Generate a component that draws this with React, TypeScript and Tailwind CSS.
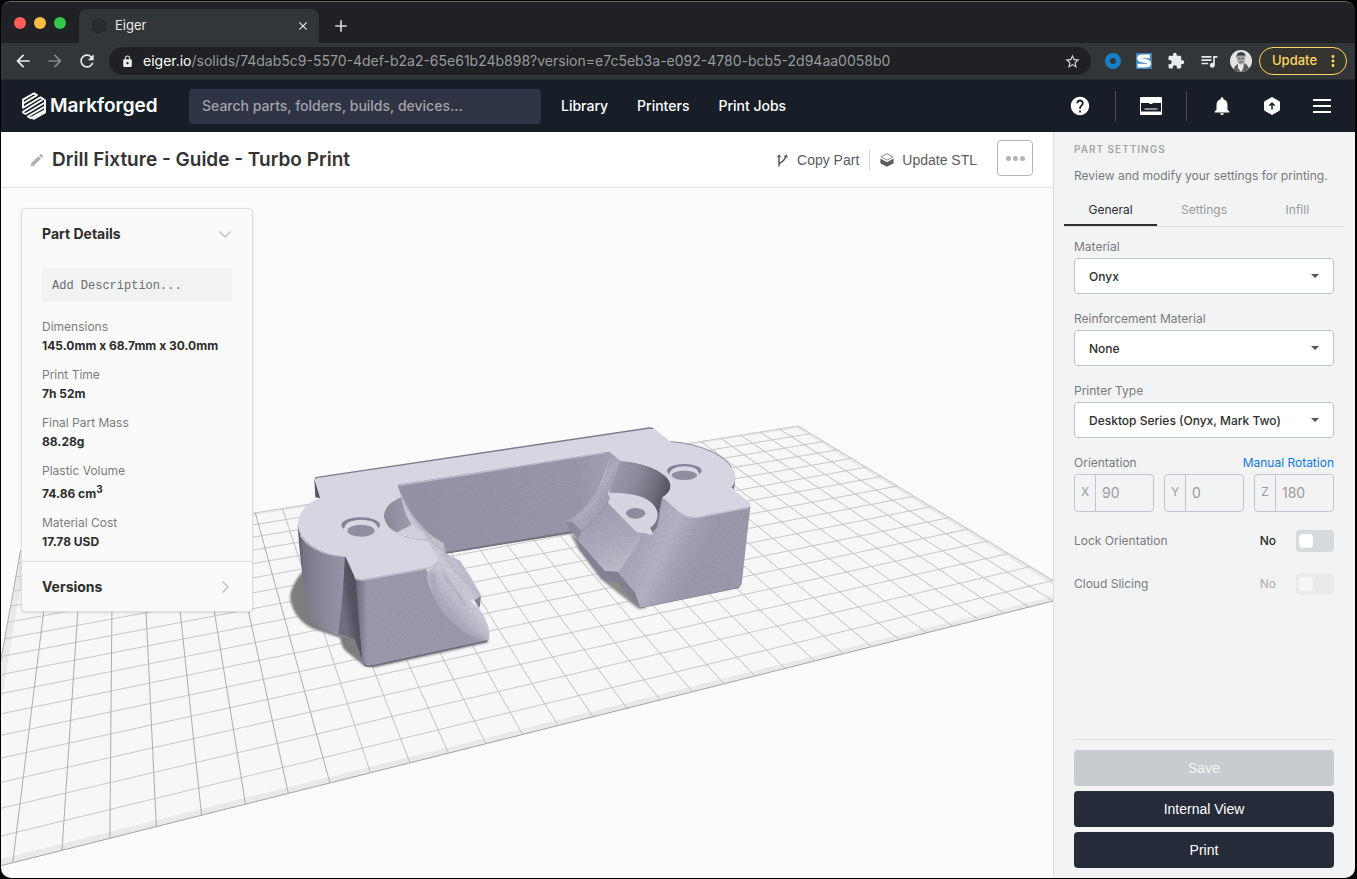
import React from 'react';
import clsx from 'clsx';
import {
  MdAdd, MdArrowBack, MdArrowForward, MdClose, MdEdit, MdExtension, MdHelp,
  MdLock, MdMoreVert, MdNotifications, MdQueueMusic, MdRefresh, MdStarBorder,
} from 'react-icons/md';

/* ---------- Build plate ---------- */

type Point = [number, number];

const COLS = 32;
const ROWS = 16;

// Projected plate corners: back left, back right, front right, front left
const CORNERS: Point[] = [[20.6, 550.4], [798, 426], [1077, 595], [-38, 875.5]];

const project = (col: number, row: number): Point => {
  const [[x0, y0], [x1, y1], [x2, y2], [x3, y3]] = CORNERS;
  const dx1 = x1 - x2, dx2 = x3 - x2, sx = x0 - x1 + x2 - x3;
  const dy1 = y1 - y2, dy2 = y3 - y2, sy = y0 - y1 + y2 - y3;
  const det = dx1 * dy2 - dx2 * dy1;
  const g = (sx * dy2 - dx2 * sy) / det;
  const h = (dx1 * sy - sx * dy1) / det;
  const u = col / COLS;
  const v = row / ROWS;
  const w = g * u + h * v + 1;
  return [
    ((x1 - x0 + g * x1) * u + (x3 - x0 + h * x3) * v + x0) / w,
    ((y1 - y0 + g * y1) * u + (y3 - y0 + h * y3) * v + y0) / w,
  ];
};

const range = (n: number) => Array.from({ length: n + 1 }, (_, i) => i);
const points = (list: Point[]) => list.map(([c, r]) => project(c, r).map((n) => n.toFixed(2)).join(',')).join(' ');

const GridLine = ({ from, to, color }: { from: Point; to: Point; color: string }) => {
  const [x1, y1] = project(...from);
  const [x2, y2] = project(...to);
  return <line x1={x1} y1={y1} x2={x2} y2={y2} stroke={color} />;
};

const BuildPlate = () => (
  <g>
    <polygon points={points([[0, 0], [COLS, 0], [COLS, ROWS], [0, ROWS]])} fill="#e9e9ec" />
    <polygon points={points([[0.2, 0.2], [31.8, 0.2], [31.8, 15.78], [0.2, 15.78]])} fill="#f7f7f7" />
    {range(ROWS).map((r) => (
      <GridLine key={r} from={[0, r]} to={[COLS, r]} color={r === ROWS ? '#a3a3a3' : '#c8c8c8'} />
    ))}
    {range(COLS).map((c) => (
      <GridLine key={c} from={[c, 0]} to={[c, ROWS]} color={c < 9 ? '#adadad' : '#c0c0c0'} />
    ))}
  </g>
);

/* ---------- Part model ---------- */

const TOP_FACE =
  'M103 192 Q104 188 112 188 L1108 39 Q1118 37 1124 42 L1172 80 Q1240 84 1300 112 Q1366 146 1366 190 Q1364 208 1352 220 L1410 263 Q1416 271 1405 277 L1256 306 Q1222 310 1200 292 L1148 247 Q1172 232 1172 211 Q1168 180 1110 156 Q1070 141 1022 138 L990 111 Q985 108 970 112 L360 208 Q350 210 352 216 L365 245 Q312 266 311 305 Q322 366 440 377 L449 384 L474 434 Q471 455 440 460 L255 494 Q232 498 224 486 L197 425 Q140 422 95 393 Q56 366 53 330 Q56 275 120 248 Z';

const SILHOUETTE =
  'M103 192 L1118 38 L1172 80 Q1366 100 1366 190 L1360 220 L1413 270 L1382 514 L1078 578 L1010 500 L965 490 L895 395 L875 350 L498 415 L540 437 L603 545 L600 578 L628 640 L626 678 L265 755 L245 735 L225 672 Q120 660 95 610 Q70 520 53 335 Q56 275 108 250 Z';

const PartModel = () => (
  <g transform="translate(280 415) scale(.33333)">
    <defs>
      <linearGradient id="cylinder" x1="53" x2="235" y1="0" y2="0" gradientUnits="userSpaceOnUse">
        <stop offset="0" stopColor="#4e4d58" />
        <stop offset=".1" stopColor="#777687" />
        <stop offset=".3" stopColor="#858494" />
        <stop offset=".75" stopColor="#9796a7" />
        <stop offset="1" stopColor="#7c7b8b" />
      </linearGradient>
      <linearGradient id="recess" x1="185" x2="245" y1="560" y2="550" gradientUnits="userSpaceOnUse">
        <stop offset="0" stopColor="#706f80" />
        <stop offset=".45" stopColor="#535260" />
        <stop offset="1" stopColor="#4a4955" />
      </linearGradient>
      <linearGradient id="blockLeft" x1="228" x2="262" y1="0" y2="0" gradientUnits="userSpaceOnUse">
        <stop offset="0" stopColor="#6a697a" />
        <stop offset="1" stopColor="#9b9aac" />
      </linearGradient>
      <linearGradient id="scoop" x1="470" x2="560" y1="620" y2="545" gradientUnits="userSpaceOnUse">
        <stop offset="0" stopColor="#9b9aac" />
        <stop offset=".55" stopColor="#b6b5c5" />
        <stop offset="1" stopColor="#cfcedb" />
      </linearGradient>
      <linearGradient id="fin" x1="470" x2="560" y1="510" y2="440" gradientUnits="userSpaceOnUse">
        <stop offset="0" stopColor="#b3b2c2" />
        <stop offset=".5" stopColor="#cecdd9" />
        <stop offset="1" stopColor="#b9b8c8" />
      </linearGradient>
      <linearGradient id="wall" x1="380" x2="990" y1="0" y2="0" gradientUnits="userSpaceOnUse">
        <stop offset="0" stopColor="#9594a6" />
        <stop offset=".85" stopColor="#9998aa" />
        <stop offset="1" stopColor="#a5a4b5" />
      </linearGradient>
      <linearGradient id="boreLeft" x1="311" x2="400" y1="0" y2="0" gradientUnits="userSpaceOnUse">
        <stop offset="0" stopColor="#8a899a" />
        <stop offset="1" stopColor="#a3a2b3" />
      </linearGradient>
      <linearGradient id="boreRight" x1="990" x2="1172" y1="170" y2="225" gradientUnits="userSpaceOnUse">
        <stop offset="0" stopColor="#9f9eb0" />
        <stop offset=".45" stopColor="#8b8a9b" />
        <stop offset=".75" stopColor="#6f6e7c" />
        <stop offset="1" stopColor="#4d4c58" />
      </linearGradient>
      <linearGradient id="saddle" x1="900" x2="985" y1="230" y2="285" gradientUnits="userSpaceOnUse">
        <stop offset="0" stopColor="#9998aa" />
        <stop offset=".4" stopColor="#aeadbd" />
        <stop offset="1" stopColor="#9f9eb0" />
      </linearGradient>
      <linearGradient id="ramp" x1="950" x2="1010" y1="300" y2="470" gradientUnits="userSpaceOnUse">
        <stop offset="0" stopColor="#a3a2b4" />
        <stop offset=".6" stopColor="#b0afbf" />
        <stop offset="1" stopColor="#c0bfcd" />
      </linearGradient>
      <linearGradient id="blockRight" x1="1060" x2="1230" y1="420" y2="500" gradientUnits="userSpaceOnUse">
        <stop offset="0" stopColor="#a9a8b9" />
        <stop offset=".4" stopColor="#b5b4c4" />
        <stop offset=".75" stopColor="#a2a1b3" />
        <stop offset="1" stopColor="#9b9aac" />
      </linearGradient>
      <filter id="soft" x="-10%" y="-10%" width="120%" height="120%">
        <feGaussianBlur stdDeviation="3" />
      </filter>
      <filter id="grain" x="0" y="0" width="100%" height="100%">
        <feTurbulence type="fractalNoise" baseFrequency=".3" numOctaves="3" />
        <feColorMatrix values="0 0 0 0 .2  0 0 0 0 .2  0 0 0 0 .27  3 0 0 0 -1.2" />
      </filter>
      <clipPath id="body">
        <path d={SILHOUETTE} />
      </clipPath>
    </defs>

    {/* cast shadow */}
    <path d="M75 460 Q25 520 31 555 Q42 610 95 640 L180 668 Q186 700 200 710 L252 752 L285 757 L630 681 L300 600 Z" fill="#7d7d7d" filter="url(#soft)" />
    <path d="M868 352 L895 402 L962 492 L1076 582 L1100 578 L1000 440 Z" fill="#8b8b8b" filter="url(#soft)" />
    <path d="M495 417 L880 354 L880 346 L495 405 Z" fill="#6f6e7c" />
    <path d="M1080 580 L1378 519 L1378 508 L1080 568 Z" fill="#6f6e7c" />

    {/* side walls */}
    <path d="M103 192 L106 247 L122 250 L130 240 Z" fill="#565561" />
    <path d="M53 330 Q60 440 75 530 Q82 590 98 615 Q125 655 225 672 L235 480 L197 420 L120 360 Z" fill="url(#cylinder)" />
    <path d="M195 423 L230 490 L247 735 L224 672 L175 658 Q190 540 195 423 Z" fill="url(#recess)" />
    <path d="M352 208 L365 260 L400 335 L450 385 L500 414 L520 380 Z" fill="#b7b6c6" />
    <path d="M352 208 L990 109 Q992 150 940 250 Q905 300 858 320 L880 350 L690 380 L498 414 L492 386 Q395 330 352 208 Z" fill="url(#wall)" />
    <path d="M500 413 L875 350" stroke="#757484" strokeWidth="4" />

    {/* left bore */}
    <path d="M365 245 Q312 266 311 305 Q318 340 352 354 L395 330 Q380 290 365 245 Z" fill="url(#boreLeft)" />

    {/* left saddle and fin */}
    <path d="M362 240 Q392 315 440 356 L492 384 Q484 398 490 412 L540 437 L575 490 L602 540 Q604 550 597 578 L584 558 Q520 540 485 470 L470 425 L440 376 L388 318 Q370 285 362 240 Z" fill="url(#fin)" />
    <path d="M410 340 Q450 372 486 404 Q500 440 560 500 Q590 528 600 543" fill="none" stroke="#b3b2c2" strokeWidth="4" filter="url(#soft)" />
    <path d="M584 556 L602 542 L600 572 L596 579 Z" fill="#858495" />
    <path d="M474 432 L488 478 L560 545 L600 585 Q622 615 628 650 L628 674 Q570 700 480 620 L438 470 Q470 455 474 432 Z" fill="url(#scoop)" />
    <path d="M488 474 Q520 520 556 568" fill="none" stroke="#a9a8b9" strokeWidth="5" filter="url(#soft)" />
    <path d="M226 488 L255 494 L440 460 Q440 520 488 590 Q540 660 626 677 L274 754 Q252 758 247 738 Z" fill="url(#blockLeft)" />
    <path d="M460 475 Q458 540 505 592 Q560 655 612 672" fill="none" stroke="#adacbd" strokeWidth="12" filter="url(#soft)" />
    <path d="M250 744 Q256 758 276 753 L622 678" fill="none" stroke="#6d6c7b" strokeWidth="4" />

    {/* right bore, saddle and ramp */}
    <path d="M1015 135 Q1070 141 1110 156 Q1168 180 1172 211 Q1172 232 1148 247 L1133 305 L985 240 Z" fill="url(#boreRight)" />
    <path d="M990 110 L1022 138 Q1012 155 1008 180 L984 235 L1010 280 L940 400 L900 385 L880 345 L870 322 L852 321 Q910 295 945 235 Q985 175 990 110 Z" fill="url(#saddle)" />
    <path d="M882 316 Q950 275 996 160" fill="none" stroke="#b7b6c6" strokeWidth="4" filter="url(#soft)" />
    <path d="M855 321 L878 321 L906 350 L894 372 L872 348 Z" fill="#8d8c9e" />
    <path d="M986 258 L1072 350 L1112 356 L1050 450 L1015 476 L975 470 L892 376 L906 352 Q950 315 986 258 Z" fill="url(#ramp)" />
    <path d="M906 350 Q950 313 985 262" fill="none" stroke="#9392a4" strokeWidth="3" />
    <path d="M1065 350 L1118 358 L1148 247 L1200 292 Q1222 310 1256 306 L1411 274 L1385 508 Q1382 516 1370 519 L1080 578 L1066 540 L1012 472 Q1055 430 1065 350 Z" fill="url(#blockRight)" />
    <path d="M1006 468 Q1050 425 1078 358" fill="none" stroke="#bfbecc" strokeWidth="7" filter="url(#soft)" />
    <path d="M892 374 L975 468 L1012 470 L1066 534 L1080 578 L1008 498 Q985 502 965 490 L895 398 Z" fill="#838294" />

    <g clipPath="url(#body)">
      <rect width="1420" height="760" filter="url(#grain)" opacity=".2" />
    </g>

    {/* counterbore floors */}
    <path d="M350 352 L396 330 L430 352 L440 375 Q390 372 350 352 Z" fill="#cfceda" />
    <path d="M352 356 Q390 375 440 376" fill="none" stroke="#8f8e9f" strokeWidth="3" />
    <path d="M1133 300 L1146 256 L1132 335 L1118 354 L1110 338 Q1130 325 1133 300 Z" fill="#7b7a8a" />
    <path d="M983 233 Q1050 232 1092 248 Q1133 270 1133 300 Q1130 325 1108 338 L1116 358 Q1108 362 1098 355 L1070 352 L984 264 L990 250 Z" fill="#d5d5e1" />
    <ellipse cx="1067" cy="295" rx="29" ry="16" fill="#8d8c9d" />

    {/* top face */}
    <path d="M1352 216 L1366 190 L1362 224 Z" fill="#7b7a8b" />
    <path d={TOP_FACE} fill="#d6d6e2" />
    <path d="M105 190 L112 187 L1108 39 L1120 40" fill="none" stroke="#7d7c90" strokeWidth="4" />
    <path d="M1172 80 Q1240 84 1300 112 Q1340 134 1354 156" fill="none" stroke="#8d8c9e" strokeWidth="3" />
    <path d="M224 487 Q232 498 255 494 L440 460 Q464 456 472 442" fill="none" stroke="#bcbbca" strokeWidth="5" />
    <path d="M1200 292 Q1222 310 1256 306 L1405 277" fill="none" stroke="#c3c2cf" strokeWidth="5" />
    <path d="M60 360 Q75 385 105 402 Q145 422 195 425" fill="none" stroke="#c0bfcd" strokeWidth="4" />
    <path d="M358 211 L975 113" fill="none" stroke="#bdbccb" strokeWidth="4" />

    {/* screw holes */}
    <ellipse cx="242" cy="330" rx="58" ry="23" fill="#83829a" />
    <path d="M192 342 Q196 315 243 314 Q290 315 294 340 Q290 352 243 356 Q196 354 192 342 Z" fill="#d8d8e3" />
    <ellipse cx="243" cy="347" rx="41" ry="18" fill="#8f8e9f" />
    <ellipse cx="1213" cy="167" rx="52" ry="20" fill="#83829a" />
    <path d="M1168 178 Q1172 155 1213 154 Q1254 155 1258 176 Q1254 188 1213 190 Q1172 188 1168 178 Z" fill="#d8d8e3" />
    <ellipse cx="1213" cy="181" rx="38" ry="14" fill="#8f8e9f" />
  </g>
);

/* ---------- Logos ---------- */

const HexLogo = ({ className }: { className?: string }) => (
  <svg viewBox="0 0 24 28" className={className} fill="none" stroke="currentColor" strokeWidth="1.9" strokeLinejoin="round" aria-hidden="true">
    <path d="M1 11.500V7.600L12 1.300l3 1.800L1 11.500v4.200L18.500 5.300l3 1.700L1 19.700v.8l2.500 1.500L23 10.500v-3M23 10.500v4.200L5.800 24.500l3 1.700L23 18.300v-3.600M23 18.300v2.200l-11 6.300-3.200-1.800" />
  </svg>
);

/* ---------- Browser chrome ---------- */

const TabStrip = () => (
  <div className="flex h-[41px] items-end bg-[#202124] pl-[13px]">
    <div className="flex h-full w-[65px] items-center gap-2">
      <span className="size-3 rounded-full bg-[#ff5f57]" />
      <span className="size-3 rounded-full bg-[#febc40]" />
      <span className="size-3 rounded-full bg-[#34c84a]" />
    </div>
    <div className="flex h-[34px] w-60 items-center rounded-t-lg bg-[#323639] px-3 text-[13px] text-[#e8eaed]">
      <HexLogo className="mr-2 h-4 w-4 text-[#242628]" />
      <span className="flex-1">Eiger</span>
      <button aria-label="Close tab" className="-mr-[3px]"><MdClose size={14} /></button>
    </div>
    <button aria-label="New tab" className="ml-3 flex h-[34px] items-center text-[#d5d7da]"><MdAdd size={20} /></button>
  </div>
);

const AddressBar = () => (
  <div className="flex h-9 items-center bg-[#323639] pl-3 pr-2 text-[#e8eaed]">
    <button aria-label="Back"><MdArrowBack size={20} /></button>
    <button aria-label="Forward" className="ml-3 text-[#85888b]"><MdArrowForward size={20} /></button>
    <button aria-label="Reload" className="ml-3"><MdRefresh size={20} /></button>
    <div className="ml-3 flex h-7 min-w-0 flex-1 items-center rounded-full bg-[#202124] pl-3 pr-[10px] text-sm">
      <MdLock size={13} className="shrink-0" />
      <div className="ml-[9px] flex-1 truncate text-[#989b9f]">
        <span className="text-white">eiger.io</span>/solids/74dab5c9-5570-4def-b2a2-65e61b24b898?version=e7c5eb3a-e092-4780-bcb5-2d94aa0058b0
      </div>
      <button aria-label="Bookmark" className="text-[#d0d2d5]"><MdStarBorder size={17} /></button>
    </div>
    <div className="ml-[14px] flex items-center gap-[15px]">
      <span className="size-4 rounded-full border-[5px] border-[#1481c9]" />
      <svg viewBox="0 0 16 16" className="size-4" aria-hidden="true">
        <rect width="16" height="16" fill="#3f84bd" />
        <path d="M14 3.400H5.500Q3 3.400 3 5.200 3 7 5.500 7.300L10.500 8.200Q13 8.700 13 10.500 13 12.600 10 12.600H1.500" fill="none" stroke="#fff" strokeWidth="3.800" />
      </svg>
      <MdExtension size={18} />
      <MdQueueMusic size={20} className="-mx-px" />
    </div>
    <svg viewBox="0 0 22 22" className="ml-3 size-[22px] rounded-full" role="img" aria-label="Profile">
      <rect width="22" height="22" fill="#e4e4e4" />
      <path d="M3 22Q4 15 8 14l6-1q5 2 6 9z" fill="#5c5c5c" />
      <path d="M8 13h6l-1 6-2 3-3-4z" fill="#e9e9e9" />
      <ellipse cx="11" cy="9" rx="4" ry="5.500" fill="#a3a3a3" />
      <path d="M6.500 8Q6 2 11 2t5 6l-1-2.500H8z" fill="#3d3d3d" />
      <path d="M8.500 8.500h2m1.500 0h2M9.500 12h3" stroke="#5a5a5a" />
    </svg>
    <button className="ml-[7px] flex h-7 w-[88px] items-center justify-between rounded-full border border-[#fdd663] bg-[#35342e] pl-3 pr-1 text-[13px] font-medium text-[#fdd663]">
      Update <MdMoreVert size={18} />
    </button>
  </div>
);

/* ---------- App header ---------- */

const Header = () => (
  <header className="flex h-[53px] items-center border-t border-[#24292f] bg-[#171e28] pl-[21px] pr-6 text-white">
    <a href="#home" className="flex w-[167px] items-center gap-1">
      <HexLogo className="h-7 w-6" />
      <span className="text-[19px] font-semibold">Markforged</span>
    </a>
    <input
      type="search"
      aria-label="Search"
      placeholder="Search parts, folders, builds, devices..."
      className="h-[35px] w-[352px] rounded bg-[#2e3346] px-[13px] pb-[2px] text-sm font-medium outline-none placeholder:text-[#a2a3a8]"
    />
    <nav className="ml-5 flex flex-1 gap-[29px] text-sm font-medium">
      <a href="#library">Library</a>
      <a href="#printers">Printers</a>
      <a href="#jobs">Print Jobs</a>
    </nav>
    <button aria-label="Help"><MdHelp size={22} /></button>
    <span className="mx-6 h-[30px] w-px bg-[#4a4f59]" />
    <button aria-label="Devices">
      <svg viewBox="0 0 22 18" className="h-[18px] w-[22px]">
        <path fillRule="evenodd" fill="#fff" d="M1 0h20a1 1 0 0 1 1 1v16a1 1 0 0 1-1 1H1a1 1 0 0 1-1-1V1a1 1 0 0 1 1-1zM1 6v8.500h20V6h-8l-1 1h-2L9 6z" />
        <path d="M4.500 12h13" stroke="#fff" />
      </svg>
    </button>
    <span className="mx-6 h-[30px] w-px bg-[#4a4f59]" />
    <div className="flex items-center gap-[30px]">
      <button aria-label="Notifications"><MdNotifications size={22} /></button>
      <button aria-label="Updates">
        <svg viewBox="0 0 18 18" className="size-[18px]">
          <path d="M9 .5l7.500 4.300v8.400L9 17.500l-7.500-4.300V4.800z" fill="#fff" stroke="#fff" strokeLinejoin="round" />
          <path d="M9 12.500V6.500M6.300 8.800L9 6l2.700 2.800" fill="none" stroke="#171e28" strokeWidth="1.500" />
        </svg>
      </button>
      <button aria-label="Menu" className="ml-[2px] flex w-[18px] flex-col gap-1">
        <span className="h-[2px] bg-white" />
        <span className="h-[2px] bg-white" />
        <span className="h-[2px] bg-white" />
      </button>
    </div>
  </header>
);

const TitleBar = () => (
  <div className="flex h-14 items-center border-b border-[#e3e3e3] bg-white pl-7 pr-5">
    <button aria-label="Rename part" className="text-[#b0b0b0]"><MdEdit size={16} /></button>
    <h1 className="ml-[7px] flex-1 pt-px text-[19px] font-semibold text-[#333]">Drill Fixture - Guide - Turbo Print</h1>
    <div className="flex items-center font-['Liberation_Sans',sans-serif] text-sm text-[#5b5c60]">
      <button className="flex items-center gap-2">
        <svg viewBox="0 0 14 14" className="size-[14px]" fill="none" stroke="currentColor" strokeWidth="1.500">
          <path d="M4 13.500V3M4 10.500Q9.500 8 10.700 3.500" />
          <path d="M1.800 4.200L4 1.300l2.200 2.900zM8.700 3.200l3.200-1.900.8 3.600z" fill="currentColor" stroke="none" />
        </svg>
        Copy Part
      </button>
      <span className="mx-[10px] h-5 w-px bg-[#dcdcdc]" />
      <button className="flex items-center gap-2">
        <svg viewBox="0 0 14 14" className="size-[14px]">
          <path d="M7 .6L13 3.800 7 7.200 1 3.800z" fill="#fff" stroke="#85868a" />
          <path d="M.4 5.600L7 9.200l6.600-3.600V10.200L7 13.800.4 10.200z" fill="currentColor" />
        </svg>
        Update STL
      </button>
    </div>
    <button aria-label="More actions" className="ml-5 mt-2 flex size-9 items-center justify-center gap-[2px] self-start rounded border border-[#b5b5b5]">
      <span className="size-[5px] rounded-full bg-[#b5b5b5]" />
      <span className="size-[5px] rounded-full bg-[#b5b5b5]" />
      <span className="size-[5px] rounded-full bg-[#b5b5b5]" />
    </button>
  </div>
);

/* ---------- Viewer ---------- */

const DETAILS: { label: string; value: React.ReactNode }[] = [
  { label: 'Dimensions', value: '145.0mm x 68.7mm x 30.0mm' },
  { label: 'Print Time', value: '7h 52m' },
  { label: 'Final Part Mass', value: '88.28g' },
  { label: 'Plastic Volume', value: <span className="flex h-[23px] items-end">74.86 cm<sup className="static self-start text-[10px] leading-[19px]">3</sup></span> },
  { label: 'Material Cost', value: '17.78 USD' },
];

const Chevron = ({ d }: { d: string }) => (
  <svg viewBox="0 0 12 12" className="size-3" fill="none" stroke="#c2c2c2" strokeWidth="1.500" aria-hidden="true">
    <path d={d} />
  </svg>
);

const PartDetails = () => (
  <section className="absolute left-5 top-5 w-58 rounded border border-[#dedede] bg-[#fafafa] text-xs shadow">
    <button className="flex h-[50px] w-full items-center justify-between pl-5 pr-[21px] text-sm font-bold text-[#2d2d2d]">
      Part Details <Chevron d="M.5 3.500L6 9l5.500-5.500" />
    </button>
    <div className="px-5 pb-[10px] pt-[9px]">
      <input
        aria-label="Description"
        placeholder="Add Description..."
        className="h-[34px] w-full bg-[#f1f3f3] px-[10px] pt-[2px] font-['Liberation_Mono',monospace] text-xs outline-none placeholder:text-[#6c6c6c]"
      />
      <dl className="mt-[15px] flex flex-col gap-[10px] leading-[19px]">
        {DETAILS.map((d) => (
          <div key={d.label}>
            <dt className="text-[#7c7c7c]">{d.label}</dt>
            <dd className="font-bold text-[#2d2d2d]">{d.value}</dd>
          </div>
        ))}
      </dl>
    </div>
    <button className="flex h-[50px] w-full items-center justify-between border-t border-[#dedede] pl-5 pr-[21px] text-sm font-bold text-[#2d2d2d]">
      Versions <Chevron d="M3.500.5L9 6l-5.500 5.500" />
    </button>
  </section>
);

const Viewer = () => (
  <div className="relative min-h-0 flex-1 overflow-hidden bg-[#fbfbfb]">
    <svg viewBox="1 188 1052 690" preserveAspectRatio="xMidYMid slice" className="absolute inset-0 size-full" role="img" aria-label="Part preview">
      <BuildPlate />
      <PartModel />
    </svg>
    <PartDetails />
  </div>
);

/* ---------- Settings panel ---------- */

const SelectField = ({ id, label, value }: { id: string; label: string; value: string }) => (
  <div>
    <label htmlFor={id} className="block">{label}</label>
    <div className="relative mt-[2px]">
      <select id={id} className="h-9 w-full appearance-none rounded border border-[#c0c4cc] bg-white px-[14px] pt-[2px] font-medium text-[#2d2d2d]">
        <option>{value}</option>
      </select>
      <span className="pointer-events-none absolute right-[15px] top-4 border-x-4 border-t-4 border-x-transparent border-t-[#55565a]" />
    </div>
  </div>
);

const Axis = ({ axis, value }: { axis: string; value: string }) => (
  <div className="flex h-[38px] min-w-0 flex-1 rounded border border-[#c3c6cc] text-[#9b9b9b]">
    <label htmlFor={`axis-${axis}`} className="w-[21px] shrink-0 border-r border-[#c3c6cc] text-center leading-[34px]">{axis}</label>
    <input id={`axis-${axis}`} defaultValue={value} className="w-full min-w-0 bg-transparent px-[6px] text-sm outline-none" />
  </div>
);

const Toggle = ({ id, label, disabled }: { id: string; label: string; disabled?: boolean }) => (
  <div className="flex h-[22px] items-center">
    <label htmlFor={id} className="flex-1">{label}</label>
    <span className={clsx('mr-5', disabled ? 'text-[#adadad]' : 'font-medium text-[#2d2d2d]')}>No</span>
    <input
      id={id}
      type="checkbox"
      disabled={disabled}
      className={clsx(
        "h-[22px] w-[38px] appearance-none rounded-sm px-[3px] py-1 before:block before:size-[14px] before:rounded-sm before:content-['']",
        disabled ? 'bg-[#e9eaeb] before:bg-[#f6f6f7]' : 'bg-[#d6dadd] before:bg-white'
      )}
    />
  </div>
);

const TABS = ['General', 'Settings', 'Infill'];

const SettingsPanel = () => (
  <aside className="flex w-[302px] shrink-0 flex-col border-l border-[#dcdde0] bg-[#f2f3f5] pb-[10px] pl-5 pr-[21px] pt-2 text-xs leading-[18px] text-[#7a7a7a]">
    <h2 className="text-[10px] font-semibold tracking-widest text-[#a6a6a6]">PART SETTINGS</h2>
    <p className="mt-[9px]">Review and modify your settings for printing.</p>
    <div role="tablist" className="-mx-[10px] mt-[7px] grid h-[35px] grid-cols-3 border-b border-[#dcdde0]">
      {TABS.map((tab, i) => (
        <button
          key={tab}
          role="tab"
          aria-selected={i === 0}
          className={clsx('h-[34px] border-b-2 pt-[3px]', i === 0 ? 'border-[#2d2d2d] text-[#2d2d2d]' : 'border-transparent text-[#9b9b9b]')}
        >
          {tab}
        </button>
      ))}
    </div>

    <div className="mt-[11px] flex flex-col gap-4">
      <SelectField id="material" label="Material" value="Onyx" />
      <SelectField id="reinforcement" label="Reinforcement Material" value="None" />
      <SelectField id="printer" label="Printer Type" value="Desktop Series (Onyx, Mark Two)" />
      <div>
        <div className="flex justify-between">
          Orientation
          <a href="#rotation" className="text-[#1377e6]">Manual Rotation</a>
        </div>
        <div className="mt-[2px] flex gap-[10px]">
          <Axis axis="X" value="90" />
          <Axis axis="Y" value="0" />
          <Axis axis="Z" value="180" />
        </div>
      </div>
    </div>
    <div className="mt-[18px] flex flex-col gap-[21px]">
      <Toggle id="lock" label="Lock Orientation" />
      <Toggle id="cloud" label="Cloud Slicing" disabled />
    </div>

    <div className="mt-auto flex flex-col gap-[5px] border-t border-[#dcdde0] pt-[10px] font-['Liberation_Sans',sans-serif] text-sm text-white">
      <button disabled className="h-9 rounded bg-[#c8cbcf] text-[#f3f4f5]">Save</button>
      <button className="h-9 rounded bg-[#252b39]">Internal View</button>
      <button className="h-9 rounded bg-[#252b39]">Print</button>
    </div>
  </aside>
);

export default function App() {
  return (
    <div className="flex h-screen min-h-[760px] bg-black pb-px pl-px pr-[2px] pt-px font-[Inter,sans-serif]">
      <div className="flex min-w-0 flex-1 flex-col overflow-hidden rounded-[10px] border-t border-[#6a6a6a] bg-[#202124]">
        <TabStrip />
        <AddressBar />
        <Header />
        <div className="flex min-h-0 flex-1">
          <main className="flex min-w-0 flex-1 flex-col">
            <TitleBar />
            <Viewer />
          </main>
          <SettingsPanel />
        </div>
      </div>
    </div>
  );
}
